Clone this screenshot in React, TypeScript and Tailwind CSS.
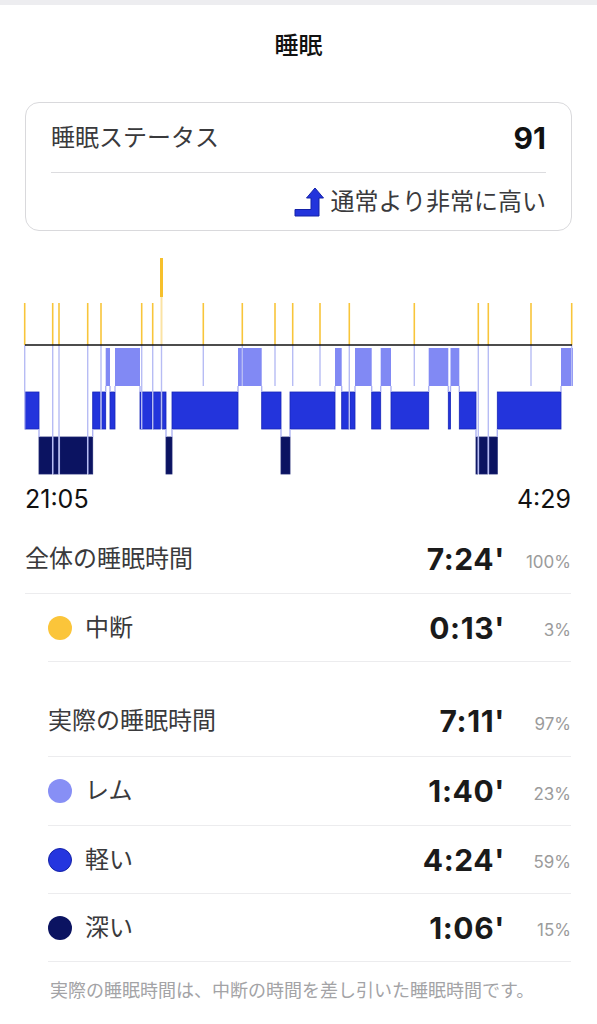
import React from "react";

type Stage = "R" | "L" | "D";

// y ranges of each band in the hypnogram (page coords)
const BANDS: Record<Stage, [number, number]> = {
  R: [348, 386],
  L: [392, 429],
  D: [437, 474],
};

const FILL: Record<Stage, string> = {
  R: "#8189f4",
  L: "#2334dc",
  D: "#0b1361",
};

const EDGE: Record<Stage, string> = {
  R: "#8189f4",
  L: "#1726b8",
  D: "#1c2470",
};

// [x start, x end, stage]
const SEGMENTS: [number, number, Stage][] = [
  [25, 39, "L"],
  [39, 52, "D"],
  [53.5, 58.3, "D"],
  [60, 87, "D"],
  [88.5, 92.7, "D"],
  [92.7, 100.3, "L"],
  [101.7, 105.7, "L"],
  [105.7, 110, "R"],
  [110, 115, "L"],
  [115, 140, "R"],
  [140, 152, "L"],
  [153.4, 160.6, "L"],
  [162.4, 166, "L"],
  [166, 172, "D"],
  [172, 238, "L"],
  [238, 261.7, "R"],
  [261.7, 281, "L"],
  [281, 290, "D"],
  [290, 335, "L"],
  [335, 341.7, "R"],
  [341.7, 348.6, "L"],
  [350, 355, "L"],
  [355, 371.7, "R"],
  [371.7, 380.7, "L"],
  [380.7, 391, "R"],
  [391, 428.7, "L"],
  [428.7, 448.3, "R"],
  [448.3, 450.5, "L"],
  [450.5, 459.3, "R"],
  [459.3, 476, "L"],
  [476, 477.6, "D"],
  [479.2, 487.4, "D"],
  [489.2, 497.3, "D"],
  [497.3, 561, "L"],
  [561, 573, "R"],
];

// awake moments (yellow ticks)
const TICKS = [24.7, 52.7, 59, 87.7, 101, 141.7, 152.7, 161.5, 203.3, 242.3, 275, 292.7, 320, 349.3, 414.3, 478.3, 488.3, 531, 571.7];

const Hypnogram = () => {
  const transitions = SEGMENTS.slice(1).map((s, i) => {
    const prev = SEGMENTS[i];
    if (prev[2] === s[2]) return null;
    const a = BANDS[prev[2]];
    const b = BANDS[s[2]];
    const top = a[0] < b[0] ? a[1] : b[1];
    const bottom = a[0] < b[0] ? b[0] : a[0];
    const x = (prev[1] + s[0]) / 2;
    return <line key={"t" + i} x1={x} x2={x} y1={top} y2={bottom} stroke="#aeb3f3" strokeWidth={1.4} />;
  });

  // bottom of the band under each tick
  const tickBottom = (x: number) => {
    let bottom = 386;
    SEGMENTS.forEach((s) => {
      if (Math.abs(s[0] - x) < 2.5 || Math.abs(s[1] - x) < 2.5) {
        bottom = Math.max(bottom, BANDS[s[2]][1]);
      }
    });
    return bottom;
  };

  return (
    <svg width="597" height="220" viewBox="0 255 597 220" className="block">
      {SEGMENTS.map(([x0, x1, st], i) => (
        <rect
          key={i}
          x={x0}
          y={BANDS[st][0]}
          width={x1 - x0}
          height={BANDS[st][1] - BANDS[st][0]}
          fill={FILL[st]}
          stroke={EDGE[st]}
          strokeWidth={st === "R" ? 0 : 0.8}
        />
      ))}
      {transitions}
      {TICKS.map((x) => (
        <line key={"l" + x} x1={x} x2={x} y1={345} y2={tickBottom(x)} stroke="#b7bcf4" strokeWidth={1.4} />
      ))}
      {TICKS.filter((x) => x !== 161.5).map((x) => (
        <line key={"y" + x} x1={x} x2={x} y1={303} y2={345} stroke="#f8c53a" strokeWidth={1.6} />
      ))}
      {/* long wake */}
      <line x1={161.5} x2={161.5} y1={297} y2={345} stroke="#fbe3a4" strokeWidth={2} />
      <line x1={161.5} x2={161.5} y1={258} y2={297} stroke="#f6c02c" strokeWidth={3} />
      <line x1={25} x2={572} y1={345} y2={345} stroke="#111" strokeWidth={1.3} />
    </svg>
  );
};

interface RowProps {
  label: string;
  value: string;
  pct: string;
  dot?: string;
  sub?: boolean;
  h: string;
}

const StatRow = ({ label, value, pct, dot, sub, h }: RowProps) => (
  <div className={`${sub ? "ml-[48px]" : "ml-[25px]"} mr-[26px] flex items-center border-b border-[#ececee] ${h}`}>
    {dot && <span className={`mr-[13px] h-[24px] w-[24px] rounded-full ${dot}`} />}
    <span className="flex-1 text-[24px] leading-none text-[#3a3a3c]">{label}</span>
    <span className="text-[30px] font-bold leading-none tracking-[0.6px] text-[#1a1a1a]">{value}</span>
    <span className="w-[66px] self-center pt-[6px] text-right text-[17px] leading-none text-[#9b9b9b]">{pct}</span>
  </div>
);

const App = () => {
  return (
    <div className="min-h-screen w-full bg-white font-['Inter','Noto_Sans_CJK_JP',sans-serif]">
      <div className="h-[5px] bg-[#ededf0]" />
      {/* Title */}
      <div className="flex h-[82px] items-center justify-center text-[24px] font-medium text-[#111]">睡眠</div>

      {/* Sleep status card */}
      <div className="mx-[25px] mt-[15px] rounded-[14px] border border-[#d9d9dc] px-[25px]">
        <div className="flex h-[70px] items-center justify-between border-b border-[#dcdcdf]">
          <span className="text-[24px] leading-none text-[#3a3a3c]">睡眠ステータス</span>
          <span className="text-[30px] font-bold leading-none text-[#111]">91</span>
        </div>
        <div className="flex h-[57px] items-center justify-end gap-[6px]">
          <svg width="30" height="30" viewBox="0 0 30 30">
            <path
              d="M21 1 L29.5 11 L25 11 L25 29 L1 29 L1 22.5 L17 22.5 L17 11 L12.5 11 Z"
              fill="#2334dc"
              stroke="#1422a8"
              strokeWidth="1"
              strokeLinejoin="miter"
            />
          </svg>
          <span className="text-[24px] leading-none text-[#3a3a3c]">通常より非常に高い</span>
        </div>
      </div>

      {/* Hypnogram */}
      <div className="mt-[24px]">
        <Hypnogram />
      </div>
      <div className="ml-[25px] mr-[26px] flex h-[48px] items-center justify-between text-[25px] leading-none text-[#111]">
        <span>21:05</span>
        <span>4:29</span>
      </div>

      {/* Summary */}
      <StatRow label="全体の睡眠時間" value="7:24'" pct="100%" h="h-[71px] pt-[2px]" />
      <StatRow label="中断" value="0:13'" pct="3%" dot="bg-[#fbc53a]" sub h="h-[68px]" />
      <StatRow label="実際の睡眠時間" value="7:11'" pct="97%" sub h="h-[95px] pt-[24px]" />
      <StatRow label="レム" value="1:40'" pct="23%" dot="bg-[#878ff5]" sub h="h-[69px]" />
      <StatRow label="軽い" value="4:24'" pct="59%" dot="bg-[#2536df] border border-[#1422a8]" sub h="h-[68px]" />
      <StatRow label="深い" value="1:06'" pct="15%" dot="bg-[#0b1361]" sub h="h-[68px]" />
      <p className="ml-[50px] pt-[20px] text-[18px] leading-none text-[#a3a3a6]">
        実際の睡眠時間は、中断の時間を差し引いた睡眠時間です。
      </p>
    </div>
  );
};

export default App;
